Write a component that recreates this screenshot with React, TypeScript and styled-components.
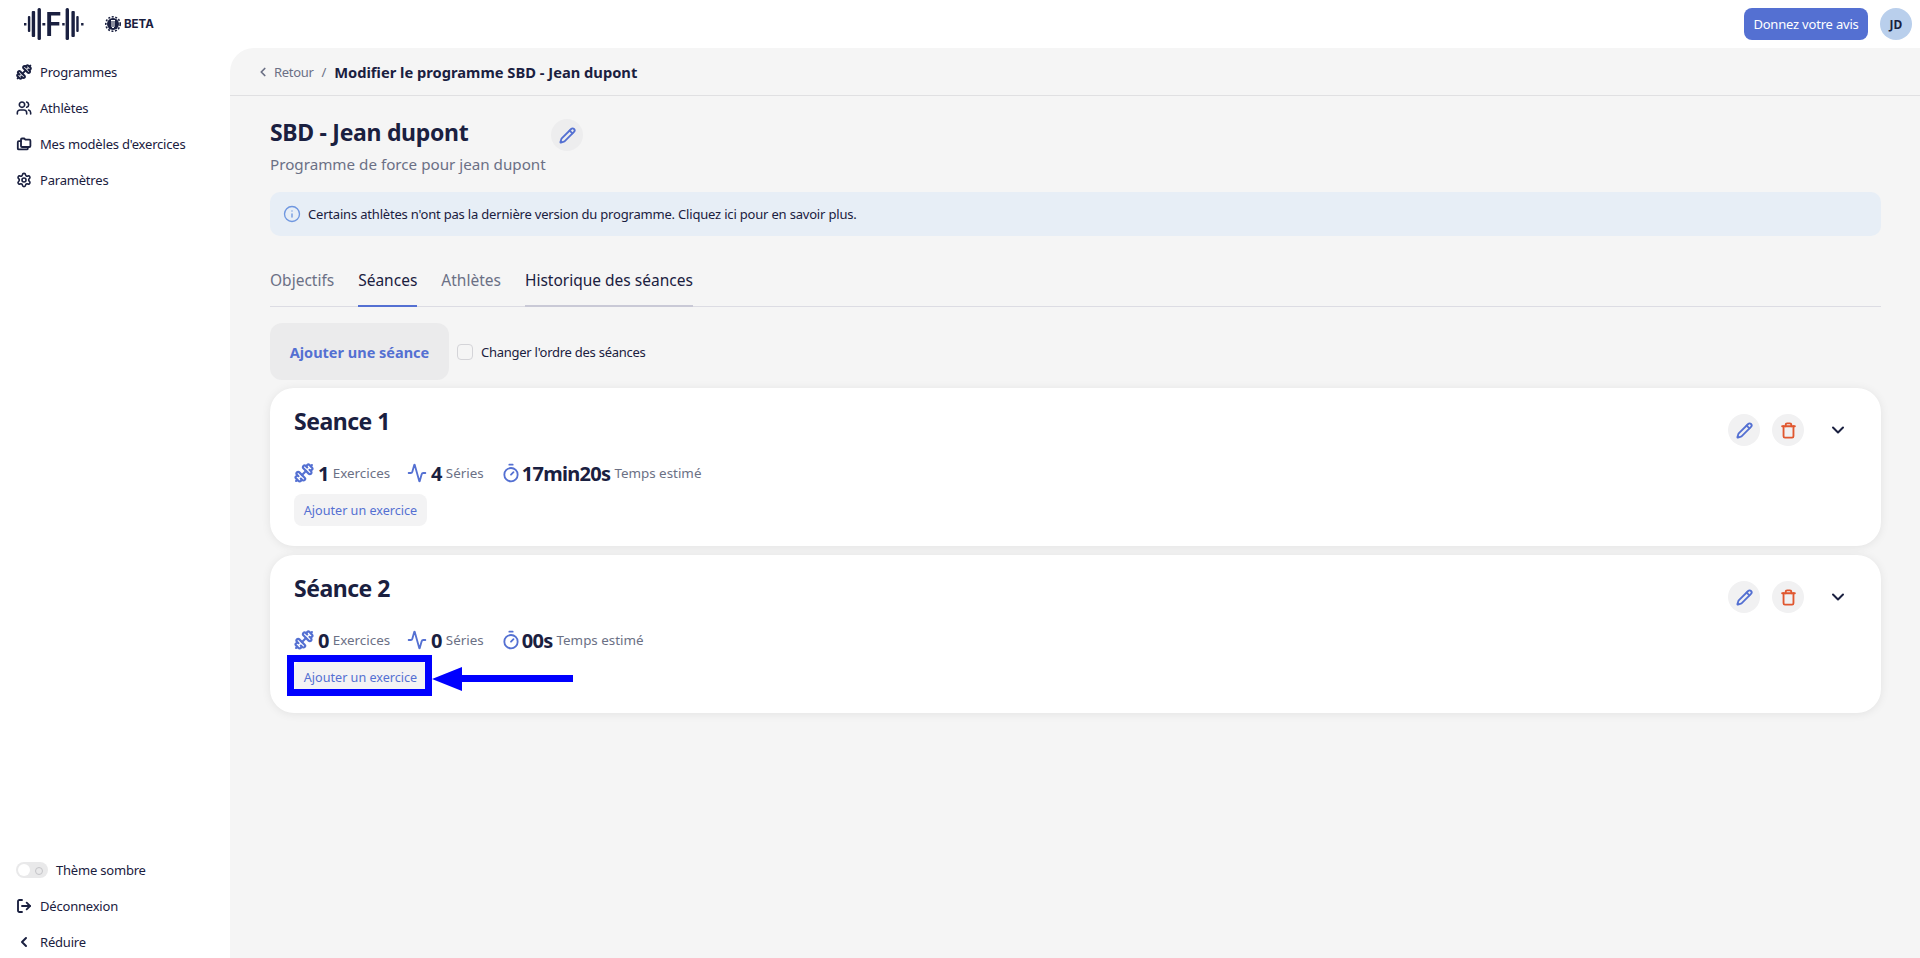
import React from "react";
import styled, { createGlobalStyle } from "styled-components";
import {
  Activity,
  ChevronDown,
  ChevronLeft,
  Dumbbell,
  Info,
  LogOut,
  Pencil,
  Settings,
  Timer,
  Trash,
  Users,
} from "lucide-react";

const GlobalStyle = createGlobalStyle`
  html, body { margin: 0; padding: 0; background: #fff; }
  body { font-family: "Noto Sans", "Open Sans", sans-serif; color: #1a2040; overflow: hidden; }
  * { box-sizing: border-box; }
`;

const Shell = styled.div`
  display: flex;
  flex-direction: column;
  height: 958px;
  overflow: hidden;
`;

const Header = styled.header`
  display: flex;
  align-items: center;
  height: 48px;
  flex: none;
  padding: 0 8px 0 24px;
`;

const Beta = styled.div`
  display: flex;
  align-items: center;
  gap: 3px;
  margin-left: 21px;
  font-family: "Inter", sans-serif;
  font-size: 11.5px;
  font-weight: 700;
  color: #1a2040;
`;

const HeaderRight = styled.div`
  margin-left: auto;
  display: flex;
  align-items: center;
  gap: 12px;
`;

const FeedbackButton = styled.button`
  height: 32px;
  width: 124px;
  padding: 0;
  border: 0;
  border-radius: 8px;
  background: #5470d2;
  color: #fff;
  font: 400 13px "Noto Sans", sans-serif;
  letter-spacing: -0.2px;
`;

const Avatar = styled.div`
  width: 32px;
  height: 32px;
  border-radius: 50%;
  background: #b9cfec;
  display: flex;
  align-items: center;
  justify-content: center;
  font-size: 12px;
  font-weight: 700;
`;

const Body = styled.div`
  flex: 1;
  display: flex;
  min-height: 0;
`;

const Sidebar = styled.aside`
  width: 230px;
  flex: none;
  display: flex;
  flex-direction: column;
  justify-content: space-between;
  padding-top: 6px;
  margin-bottom: -2px;
`;

const NavGroup = styled.nav`
  display: flex;
  flex-direction: column;
`;

const NavItem = styled.a`
  height: 36px;
  display: flex;
  align-items: center;
  gap: 8px;
  padding-left: 16px;
  font-size: 13px;
  letter-spacing: -0.2px;
  color: #1a2040;
  svg { flex: none; }
`;

const Toggle = styled.span`
  position: relative;
  width: 32px;
  height: 16px;
  border-radius: 8px;
  background: #e9e9ea;
  flex: none;
  &::before {
    content: "";
    position: absolute;
    left: 2px;
    top: 2px;
    width: 12px;
    height: 12px;
    border-radius: 50%;
    background: #fff;
  }
  &::after {
    content: "";
    position: absolute;
    right: 5px;
    top: 5px;
    width: 6px;
    height: 6px;
    border-radius: 50%;
    border: 1px solid #c4c4c8;
  }
`;

const Main = styled.main`
  flex: 1;
  min-width: 0;
  background: #f5f5f5;
  border-top-left-radius: 24px;
`;

const Breadcrumb = styled.div`
  height: 48px;
  display: flex;
  align-items: center;
  padding-left: 26px;
  border-bottom: 1px solid #e0e0e2;
  font-size: 13px;
  letter-spacing: -0.3px;
`;

const BackLink = styled.a`
  display: flex;
  align-items: center;
  gap: 4px;
  color: #6b7085;
`;

const Slash = styled.span`
  margin: 0 8px;
  color: #6b7085;
`;

const CrumbTitle = styled.strong`
  font-size: 14.7px;
  font-weight: 700;
  letter-spacing: 0;
`;

const Content = styled.div`
  padding: 19px 39px 0 40px;
`;

const TitleRow = styled.div`
  display: flex;
  align-items: flex-start;
  gap: 4px;
`;

const PageTitle = styled.h1`
  margin: 0;
  font-size: 23px;
  letter-spacing: -0.3px;
  line-height: 34px;
  font-weight: 700;
`;

const Subtitle = styled.p`
  margin: 4px 0 0;
  font-size: 15.2px;
  line-height: 22px;
  white-space: nowrap;
  color: #6b7085;
`;

const TitleBlock = styled.div`
  width: 277px;
`;

const IconCircle = styled.button<{ $danger?: boolean }>`
  width: 32px;
  height: 32px;
  padding: 0;
  border: 0;
  border-radius: 50%;
  background: #f1f1f2;
  color: ${(p) => (p.$danger ? "#e0572f" : "#5470d2")};
  display: flex;
  align-items: center;
  justify-content: center;
`;

const TitleEdit = styled(IconCircle)`
  background: #ededee;
  margin-top: 4px;
`;

const Alert = styled.div`
  height: 44px;
  margin-top: 17px;
  border-radius: 10px;
  background: #e7eef6;
  display: flex;
  align-items: center;
  gap: 7px;
  padding-left: 13px;
  font-size: 13px;
  letter-spacing: -0.19px;
  svg { color: #6f97e0; }
`;

const Tabs = styled.div`
  display: flex;
  gap: 24px;
  margin-top: 26px;
  height: 45px;
  border-bottom: 1px solid #dcdce3;
`;

const Tab = styled.div<{ $state?: "active" | "hover" }>`
  height: 45px;
  padding-top: 7px;
  font-size: 15.5px;
  line-height: 22px;
  color: ${(p) => (p.$state ? "#1a2040" : "#6b7085")};
  border-bottom: 2px solid
    ${(p) =>
      p.$state === "active"
        ? "#5470d2"
        : p.$state === "hover"
          ? "#c9c9d6"
          : "transparent"};
`;

const Toolbar = styled.div`
  display: flex;
  align-items: center;
  gap: 8px;
  margin-top: 16px;
`;

const AddSession = styled.button`
  width: 179px;
  height: 57px;
  padding: 0;
  border: 0;
  border-radius: 12px;
  background: #ebebec;
  color: #5470d2;
  font: 700 14.5px "Noto Sans", sans-serif;
`;

const CheckLabel = styled.label`
  display: flex;
  align-items: center;
  gap: 8px;
  font-size: 13px;
  letter-spacing: -0.26px;
`;

const CheckBox = styled.span`
  width: 16px;
  height: 16px;
  border: 1px solid #d4d4d8;
  border-radius: 4px;
  background: #f5f5f5;
`;

const Cards = styled.div`
  display: flex;
  flex-direction: column;
  gap: 9px;
  margin-top: 8px;
`;

const Card = styled.section`
  height: 158px;
  border-radius: 24px;
  background: #fff;
  padding: 16px 24px 0;
  box-shadow: 0 1px 10px rgba(0, 0, 0, 0.08);
`;

const CardHead = styled.div`
  display: flex;
  align-items: flex-start;
  justify-content: space-between;
  height: 50px;
`;

const CardTitle = styled.h2`
  margin: 0;
  font-size: 23px;
  letter-spacing: -0.5px;
  line-height: 34px;
  font-weight: 700;
`;

const CardActions = styled.div`
  display: flex;
  align-items: center;
  gap: 12px;
  margin-top: 10px;
  svg { flex: none; }
`;

const Chevron = styled(ChevronDown)`
  margin: 0 9px 0 12px;
  color: #1a2040;
`;

const Stats = styled.div`
  display: flex;
  align-items: center;
  gap: 17px;
  height: 28px;
  margin-top: 5px;
`;

const Stat = styled.div<{ $tight?: boolean }>`
  display: flex;
  align-items: center;
  gap: 4px;
  color: #6b7085;
  font-size: 13.4px;
  svg { color: #5470d2; flex: none; margin-right: ${(p) => (p.$tight ? "-3px" : "0")}; }
`;

const StatValue = styled.strong`
  color: #1a2040;
  font-size: 20px;
  letter-spacing: -0.7px;
  font-weight: 700;
`;

const AddExercise = styled.button`
  display: block;
  width: 133px;
  height: 32px;
  padding: 0;
  border: 0;
  border-radius: 8px;
  background: #f3f3f4;
  color: #5470d2;
  font: 400 12.6px "Noto Sans", sans-serif;
`;

const ExerciseSlot = styled.div`
  position: relative;
  width: max-content;
  margin-top: 7px;
`;

const Highlight = styled.span`
  position: absolute;
  inset: -6px -5px -3px -7px;
  border: 7px solid #0000ff;
`;

const Arrow = styled.svg`
  position: absolute;
  left: 138px;
  top: 6px;
`;

const Logo = () => (
  <svg width="60" height="32" viewBox="0 0 62 32" preserveAspectRatio="none" fill="#1a2040">
    <rect x="0" y="15" width="2.500" height="2.500" />
    <rect x="4" y="8" width="2.500" height="16" rx="1" />
    <rect x="8" y="3" width="3.500" height="26" rx="1" />
    <rect x="14" y="0" width="3.500" height="32" rx="1.500" />
    <rect x="19" y="15" width="3" height="2.500" />
    <path d="M24 4h13.500v3.500h-9.500v6.500h8.500v3.500h-8.500v10.500h-4z" />
    <rect x="39.500" y="15" width="2.500" height="2.500" />
    <rect x="43" y="0" width="3.500" height="32" rx="1.500" />
    <rect x="49" y="3" width="3.500" height="26" rx="1" />
    <rect x="54" y="8" width="2.500" height="16" rx="1" />
    <rect x="59" y="15" width="2.500" height="2.500" />
  </svg>
);

const BetaGear = () => (
  <svg width="16" height="16" viewBox="0 0 16 16">
    <circle cx="8" cy="8" r="6" fill="#1a2040" />
    <circle cx="8" cy="8" r="7.200" fill="none" stroke="#1a2040" strokeWidth="1.600" strokeDasharray="2 1.600" />
    <path d="M6 4.500h4M7 4.500v6.500l1 1 1-1V4.500" fill="none" stroke="#fff" strokeWidth="1" />
  </svg>
);

const Stack = () => (
  <svg width="16" height="16" viewBox="0 0 16 16" fill="none" stroke="#1a2040" strokeWidth="1.800" strokeLinejoin="round" strokeLinecap="round">
    <path d="M5 3.500c0-.6.4-1 1-1h2.200l1.200 1.200h4c.6 0 1 .4 1 1V10c0 .6-.4 1-1 1H6c-.6 0-1-.4-1-1z" />
    <path d="M5 5.200H2.800c-.6 0-1 .4-1 1v6.200c0 .6.4 1 1 1h8c.6 0 1-.4 1-1V11" />
  </svg>
);

const sessions = [
  { title: "Seance 1", exercises: 1, series: 4, time: "17min20s", marked: false },
  { title: "Séance 2", exercises: 0, series: 0, time: "00s", marked: true },
];

export default function App() {
  return (
    <Shell>
      <GlobalStyle />
      <Header>
        <Logo />
        <Beta>
          <BetaGear />
          BETA
        </Beta>
        <HeaderRight>
          <FeedbackButton>Donnez votre avis</FeedbackButton>
          <Avatar>JD</Avatar>
        </HeaderRight>
      </Header>
      <Body>
        <Sidebar>
          <NavGroup>
            <NavItem><Dumbbell size={16} strokeWidth={3} />Programmes</NavItem>
            <NavItem><Users size={16} strokeWidth={2.4} />Athlètes</NavItem>
            <NavItem><Stack />Mes modèles d'exercices</NavItem>
            <NavItem><Settings size={16} strokeWidth={2.4} />Paramètres</NavItem>
          </NavGroup>
          <NavGroup>
            <NavItem><Toggle />Thème sombre</NavItem>
            <NavItem><LogOut size={16} strokeWidth={2.8} />Déconnexion</NavItem>
            <NavItem><ChevronLeft size={16} strokeWidth={3} />Réduire</NavItem>
          </NavGroup>
        </Sidebar>
        <Main>
          <Breadcrumb>
            <BackLink><ChevronLeft size={14} strokeWidth={3} />Retour</BackLink>
            <Slash>/</Slash>
            <CrumbTitle>Modifier le programme SBD - Jean dupont</CrumbTitle>
          </Breadcrumb>
          <Content>
            <TitleRow>
              <TitleBlock>
                <PageTitle>SBD - Jean dupont</PageTitle>
                <Subtitle>Programme de force pour jean dupont</Subtitle>
              </TitleBlock>
              <TitleEdit><Pencil size={17} strokeWidth={2.6} /></TitleEdit>
            </TitleRow>
            <Alert>
              <Info size={18} strokeWidth={1.8} />
              Certains athlètes n'ont pas la dernière version du programme. Cliquez ici pour en savoir plus.
            </Alert>
            <Tabs>
              <Tab>Objectifs</Tab>
              <Tab $state="active">Séances</Tab>
              <Tab>Athlètes</Tab>
              <Tab $state="hover">Historique des séances</Tab>
            </Tabs>
            <Toolbar>
              <AddSession>Ajouter une séance</AddSession>
              <CheckLabel><CheckBox />Changer l'ordre des séances</CheckLabel>
            </Toolbar>
            <Cards>
              {sessions.map((s) => (
                <Card key={s.title}>
                  <CardHead>
                    <CardTitle>{s.title}</CardTitle>
                    <CardActions>
                      <IconCircle><Pencil size={17} strokeWidth={2.6} /></IconCircle>
                      <IconCircle $danger><Trash size={17} strokeWidth={2.6} /></IconCircle>
                      <Chevron size={20} strokeWidth={2.4} />
                    </CardActions>
                  </CardHead>
                  <Stats>
                    <Stat><Dumbbell size={20} strokeWidth={2.6} /><StatValue>{s.exercises}</StatValue>Exercices</Stat>
                    <Stat><Activity size={20} strokeWidth={2.2} /><StatValue>{s.series}</StatValue>Séries</Stat>
                    <Stat $tight><Timer size={20} strokeWidth={2.2} /><StatValue>{s.time}</StatValue>Temps estimé</Stat>
                  </Stats>
                  <ExerciseSlot>
                    <AddExercise>Ajouter un exercice</AddExercise>
                    {s.marked && (
                      <>
                        <Highlight />
                        <Arrow width="141" height="24" viewBox="0 0 141 24">
                          <path d="M0 12 L30 0 V8 H141 V15 H30 V24 Z" fill="#0000ff" />
                        </Arrow>
                      </>
                    )}
                  </ExerciseSlot>
                </Card>
              ))}
            </Cards>
          </Content>
        </Main>
      </Body>
    </Shell>
  );
}
